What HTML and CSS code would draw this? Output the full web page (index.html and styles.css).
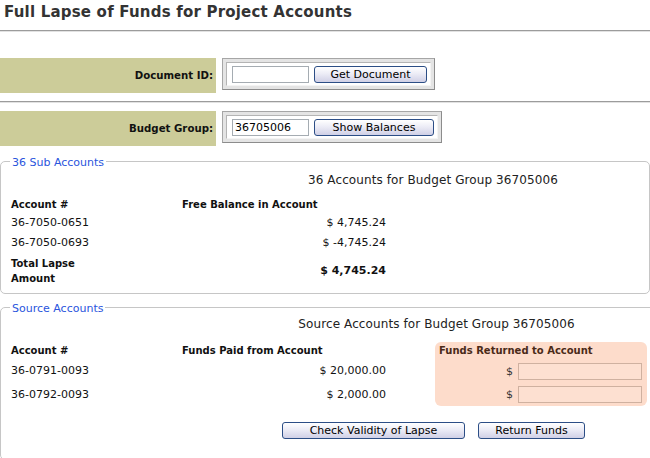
FILE: index.html
```html
<!DOCTYPE html>
<html>
<head>
<meta charset="utf-8">
<link rel="stylesheet" href="styles.css">
</head>
<body>
<h1 class="title">Full Lapse of Funds for Project Accounts</h1>
<div class="rule"></div>

<div class="lookup first">
  <div class="lookup-label">Document ID:</div>
  <div class="frame">
    <div class="frame-inner">
      <input class="text-in" type="text" value="">
      <button class="btn btn-get">Get Document</button>
    </div>
  </div>
</div>
<div class="rule mid"></div>
<div class="lookup">
  <div class="lookup-label">Budget Group:</div>
  <div class="frame">
    <div class="frame-inner">
      <input class="text-in" type="text" value="36705006">
      <button class="btn btn-show">Show Balances</button>
    </div>
  </div>
</div>

<fieldset class="box box-sub">
  <legend>36 Sub Accounts</legend>
  <div class="caption">36 Accounts for Budget Group 36705006</div>
  <div class="grid sub-grid">
    <div class="hd">Account #</div>
    <div class="hd">Free Balance in Account</div>
    <div class="cell">36-7050-0651</div>
    <div class="cell num">$ 4,745.24</div>
    <div class="cell">36-7050-0693</div>
    <div class="cell num">$ -4,745.24</div>
    <div class="cell total-label">Total Lapse<br>Amount</div>
    <div class="cell num total-num">$ 4,745.24</div>
  </div>
</fieldset>

<fieldset class="box box-src">
  <legend>Source Accounts</legend>
  <div class="caption">Source Accounts for Budget Group 36705006</div>
  <div class="src-wrap">
    <div class="grid src-grid">
      <div class="hd">Account #</div>
      <div class="hd">Funds Paid from Account</div>
      <div class="cell">36-0791-0093</div>
      <div class="cell num">$ 20,000.00</div>
      <div class="cell">36-0792-0093</div>
      <div class="cell num">$ 2,000.00</div>
    </div>
    <div class="returned">
      <div class="ret-hd">Funds Returned to Account</div>
      <div class="ret-row r1"><span>$</span><input class="ret-in" type="text"></div>
      <div class="ret-row r2"><span>$</span><input class="ret-in" type="text"></div>
    </div>
  </div>
  <div class="actions">
    <button class="btn btn-check">Check Validity of Lapse</button>
    <button class="btn btn-return">Return Funds</button>
  </div>
</fieldset>
</body>
</html>
```

FILE: styles.css
```css
html, body {
  margin: 0;
  padding: 0;
  background: #ffffff;
}
body {
  font-family: "DejaVu Sans", Verdana, sans-serif;
  font-size: 11px;
  color: #000;
  width: 650px;
  overflow: hidden;
}
.title {
  margin: 0;
  height: 30px;
  padding: 0 4px;
  font-size: 15px;
  letter-spacing: 0.2px;
  line-height: 24px;
  font-weight: bold;
  color: #333;
}
.rule {
  height: 0;
  border-top: 1px solid #9c9c9c;
  border-bottom: 1px solid #e2e2e2;
}
.rule.mid {
  margin-top: 8px;
}
.lookup {
  display: flex;
  align-items: flex-start;
  gap: 6px;
  margin-top: 8px;
}
.lookup.first {
  margin-top: 26px;
}
.lookup-label {
  width: 216px;
  height: 35px;
  box-sizing: border-box;
  background: #cccc99;
  font-weight: bold;
  font-size: 10.2px;
  text-align: right;
  padding-right: 3px;
  display: flex;
  align-items: center;
  justify-content: flex-end;
  color: #111;
}
.frame {
  border: 1px solid #a6a6a6;
  border-right-color: #8c8c8c;
  border-bottom-color: #8c8c8c;
  background: #e4e4e4;
  padding: 3px;
}
.frame-inner {
  background: #fff;
  border: 1px solid #b4b4b4;
  border-right-color: #f4f4f4;
  border-bottom-color: #f4f4f4;
  display: flex;
  align-items: center;
  gap: 5px;
  padding: 3px 3px 2px 5px;
}
.text-in {
  width: 77px;
  height: 17px;
  box-sizing: border-box;
  border: 1px solid #a5acb2;
  font-family: inherit;
  font-size: 11px;
  padding: 0 2px;
  margin: 0;
  color: #000;
}
.btn {
  height: 17px;
  box-sizing: border-box;
  border: 1px solid #2c4e86;
  border-radius: 3px;
  background: linear-gradient(#ffffff, #ececf6 45%, #d0d0e6);
  font-family: inherit;
  font-size: 11px;
  line-height: 13px;
  color: #000;
  padding: 0;
  margin: 0;
  text-align: center;
}
.btn-get { width: 113px; }
.btn-show { width: 120px; }
.btn-check { width: 183px; }
.btn-return { width: 107px; }

.box {
  margin: 6px 0 0 0;
  border: 1px solid #c6c6c6;
  border-radius: 5px;
  padding: 0 9px 7px 9px;
}
.box-src {
  margin-top: 4px;
  padding-bottom: 20px;
}
.box legend {
  padding: 4px 2px 0 2px;
  line-height: 14px;
  color: #2a55dd;
}
.caption {
  margin-left: 216px;
  text-align: center;
  line-height: 14px;
  font-size: 12px;
  letter-spacing: 0.1px;
  color: #222;
}
.box-sub .caption {
  padding-top: 3px;
  margin-bottom: 10px;
}
.box-src .caption {
  padding-top: 1px;
  margin-bottom: 11px;
}
.grid {
  display: grid;
  grid-template-columns: 171px 204px;
  padding-left: 1px;
  color: #111;
}
.hd {
  font-weight: bold;
  font-size: 10px;
  line-height: 16px;
}
.cell {
  line-height: 20px;
}
.num {
  text-align: right;
}
.total-label {
  font-weight: bold;
  font-size: 10px;
  line-height: 15px;
  margin-top: 3px;
}
.total-num {
  font-weight: bold;
  font-size: 11px;
  align-self: center;
  margin-top: 3px;
}
.src-wrap {
  display: flex;
  align-items: flex-start;
  gap: 49px;
}
.src-grid .hd {
  line-height: 17px;
}
.src-grid .cell {
  line-height: 24px;
}
.returned {
  width: 212px;
  height: 64px;
  box-sizing: border-box;
  background: #fddccb;
  border-radius: 6px;
  padding: 0 5px 0 4px;
}
.ret-hd {
  font-weight: bold;
  font-size: 10px;
  line-height: 17px;
  color: #4a2a18;
}
.ret-row {
  display: flex;
  align-items: center;
  justify-content: flex-end;
  gap: 5px;
  height: 24px;
  color: #333;
}
.ret-row.r2 {
  height: 23px;
}
.ret-in {
  width: 124px;
  height: 17px;
  box-sizing: border-box;
  border: 1px solid #cfb1a0;
  background: #fde0d1;
  margin: 0;
  padding: 0;
}
.actions {
  display: flex;
  gap: 13px;
  margin-top: 15px;
  margin-left: 272px;
}
```
